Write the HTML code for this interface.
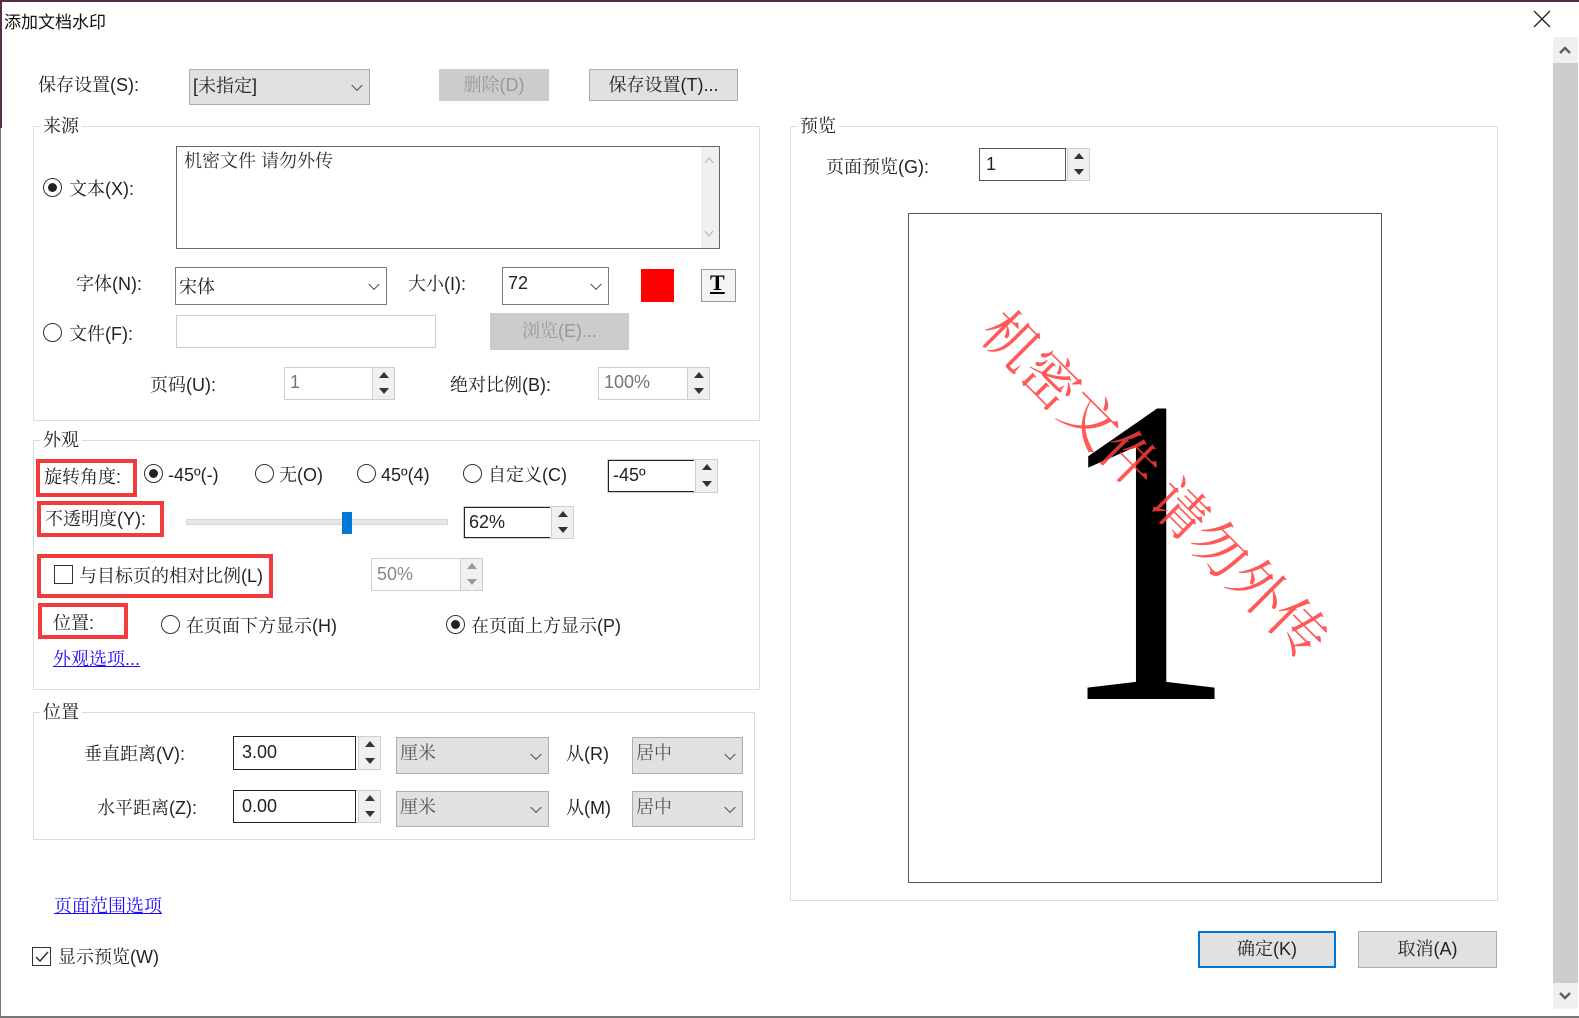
<!DOCTYPE html>
<html><head><meta charset="utf-8"><style>
*{box-sizing:border-box;margin:0;padding:0}
body{width:1579px;height:1018px;background:#fff;position:relative;overflow:hidden;font-family:"Liberation Sans","Noto Serif CJK SC",serif;font-size:18px;color:#222}
.a{position:absolute;white-space:nowrap}
.t{font-family:"Liberation Sans","Noto Serif CJK SC",serif;font-size:18px;line-height:20px}
.grp{position:absolute;border:1px solid #dcdcdc}
.gl{position:absolute;background:#fff;padding:0 3px;font-family:"Noto Serif CJK SC",serif;font-size:18px;line-height:20px;top:-12px;left:6px;color:#222}
.cmb{position:absolute;border:1px solid #7a7a7a;background:#fff}
.cmbg{position:absolute;border:1px solid #adadad;background:#e1e1e1}
.chev{position:absolute;right:8px;top:50%;width:8px;height:8px;border-right:1px solid #444;border-bottom:1px solid #444;transform:translateY(-70%) rotate(45deg)}
.btn{position:absolute;border:1px solid #adadad;background:#e1e1e1;text-align:center}
.spin{position:absolute;border:1px solid #cfcfcf;background:#fff}
.sp{position:absolute;right:0;width:22px;background:#f0f0f0;border-left:1px solid #cfcfcf}
.up,.dn{position:absolute;left:6px;width:0;height:0;border-left:5px solid transparent;border-right:5px solid transparent}
.up{border-bottom:6px solid #333}.dn{border-top:6px solid #333}
.rad{position:absolute;width:19px;height:19px;border:1px solid #333;border-radius:50%;background:#fff}
.rad.on::after{content:"";position:absolute;left:4px;top:4px;width:9px;height:9px;border-radius:50%;background:#222}
.red{position:absolute;border:4px solid #f43b3b}
.lnk{color:#1a0dff;text-decoration:underline}
</style></head><body>
<div class="a" style="left:0;top:0;width:1579px;height:2px;background:#5a2a4a"></div>
<div class="a" style="left:0;top:0;width:2px;height:128px;background:#5a2a4a"></div>
<div class="a" style="left:0;top:128px;width:1px;height:890px;background:#777"></div>
<div class="a" style="left:0;top:1016px;width:1579px;height:2px;background:#777"></div>
<div class="a" style="left:4px;top:8px;font-family:'Noto Sans CJK SC',sans-serif;font-size:17px;color:#111">添加文档水印</div>
<svg class="a" style="left:1533px;top:10px" width="18" height="18"><path d="M1 1L17 17M17 1L1 17" stroke="#222" stroke-width="1.3"/></svg>
<div class="a" style="left:1553px;top:37px;width:25px;height:972px;background:#cdcdcd"></div>
<div class="a" style="left:1553px;top:37px;width:25px;height:26px;background:#f0f0f0"></div>
<div class="a" style="left:1553px;top:983px;width:25px;height:26px;background:#f0f0f0"></div>
<svg class="a" style="left:1558px;top:44px" width="14" height="12"><path d="M2 9L7 4L12 9" stroke="#606060" stroke-width="2.5" fill="none"/></svg>
<svg class="a" style="left:1558px;top:990px" width="14" height="12"><path d="M2 3L7 8L12 3" stroke="#606060" stroke-width="2.5" fill="none"/></svg>

<div class="a t" style="left:38px;top:75px">保存设置(S):</div>
<div class="cmbg" style="left:189px;top:69px;width:181px;height:36px"><span class="a t" style="left:3px;top:6px">[未指定]</span><i class="chev"></i></div>
<div class="btn" style="left:439px;top:69px;width:110px;height:32px;background:#ccc;border-color:#ccc"><span class="t" style="line-height:30px;color:#999">删除(D)</span></div>
<div class="btn" style="left:589px;top:69px;width:149px;height:32px"><span class="t" style="line-height:30px">保存设置(T)...</span></div>

<div class="grp" style="left:33px;top:126px;width:727px;height:295px"><span class="gl">来源</span></div>
<div class="rad on" style="left:43px;top:178px"></div>
<div class="a t" style="left:69px;top:179px">文本(X):</div>
<div class="a" style="left:176px;top:146px;width:544px;height:103px;border:1px solid #666;background:#fff"><span class="a t" style="left:7px;top:4px;color:#333">机密文件 请勿外传</span>
<div class="a" style="right:0;top:0;width:18px;height:101px;background:#f0f0f0"></div>
<svg class="a" style="right:4px;top:8px" width="12" height="10"><path d="M2 8L6 3L10 8" stroke="#bbb" fill="none" stroke-width="1.3"/></svg>
<svg class="a" style="right:4px;top:82px" width="12" height="10"><path d="M2 2L6 7L10 2" stroke="#bbb" fill="none" stroke-width="1.3"/></svg></div>
<div class="a t" style="left:76px;top:274px">字体(N):</div>
<div class="cmb" style="left:175px;top:267px;width:212px;height:38px"><span class="a t" style="left:3px;top:9px">宋体</span><i class="chev"></i></div>
<div class="a t" style="left:408px;top:274px">大小(I):</div>
<div class="cmb" style="left:502px;top:267px;width:107px;height:38px"><span class="a t" style="left:5px;top:5px">72</span><i class="chev"></i></div>
<div class="a" style="left:641px;top:269px;width:33px;height:33px;background:#f00"></div>
<div class="a" style="left:701px;top:269px;width:35px;height:33px;border:1px solid #999;background:#f4f4f4"><span class="a" style="left:8px;top:0px;font-family:'Liberation Serif',serif;font-weight:bold;font-size:22px;text-decoration:underline;color:#000">T</span></div>
<div class="rad" style="left:43px;top:323px"></div>
<div class="a t" style="left:69px;top:324px">文件(F):</div>
<div class="a" style="left:176px;top:315px;width:260px;height:33px;border:1px solid #ccc"></div>
<div class="btn" style="left:490px;top:313px;width:139px;height:37px;background:#ccc;border-color:#ccc"><span class="t" style="line-height:35px;color:#999">浏览(E)...</span></div>
<div class="a t" style="left:150px;top:375px">页码(U):</div>
<div class="spin" style="left:284px;top:367px;width:111px;height:33px"><span class="a t" style="left:5px;top:4px;color:#777">1</span><div class="sp" style="top:0;height:15px"><i class="up" style="top:4px"></i></div><div class="sp" style="top:15px;height:16px"><i class="dn" style="top:5px"></i></div></div>
<div class="a t" style="left:450px;top:375px">绝对比例(B):</div>
<div class="spin" style="left:598px;top:367px;width:112px;height:33px"><span class="a t" style="left:5px;top:4px;color:#777">100%</span><div class="sp" style="top:0;height:15px"><i class="up" style="top:4px"></i></div><div class="sp" style="top:15px;height:16px"><i class="dn" style="top:5px"></i></div></div>

<div class="grp" style="left:33px;top:440px;width:727px;height:250px"><span class="gl">外观</span></div>
<div class="red" style="left:36px;top:459px;width:101px;height:38px"></div>
<div class="a t" style="left:44px;top:467px">旋转角度:</div>
<div class="rad on" style="left:144px;top:464px"></div><div class="a t" style="left:168px;top:465px">-45º(-)</div>
<div class="rad" style="left:255px;top:464px"></div><div class="a t" style="left:279px;top:465px">无(O)</div>
<div class="rad" style="left:357px;top:464px"></div><div class="a t" style="left:381px;top:465px">45º(4)</div>
<div class="rad" style="left:463px;top:464px"></div><div class="a t" style="left:488px;top:465px">自定义(C)</div>
<div class="spin" style="left:607px;top:459px;width:111px;height:34px;border-color:#cfcfcf"><div class="a" style="left:0;top:0;width:86px;height:32px;border:1px solid #222;border-right:none"></div><span class="a t" style="left:5px;top:5px">-45º</span><div class="sp" style="top:0;height:16px"><i class="up" style="top:4px"></i></div><div class="sp" style="top:16px;height:16px"><i class="dn" style="top:5px"></i></div></div>
<div class="red" style="left:37px;top:501px;width:127px;height:36px"></div>
<div class="a t" style="left:45px;top:509px">不透明度(Y):</div>
<div class="a" style="left:186px;top:519px;width:262px;height:6px;background:#e7e7e7;border:1px solid #d6d6d6"></div>
<div class="a" style="left:342px;top:512px;width:10px;height:22px;background:#0078d7"></div>
<div class="spin" style="left:463px;top:506px;width:111px;height:33px"><div class="a" style="left:0;top:0;width:86px;height:31px;border:1px solid #222;border-right:none"></div><span class="a t" style="left:5px;top:5px">62%</span><div class="sp" style="top:0;height:15px"><i class="up" style="top:4px"></i></div><div class="sp" style="top:15px;height:16px"><i class="dn" style="top:5px"></i></div></div>
<div class="red" style="left:37px;top:554px;width:236px;height:44px"></div>
<div class="a" style="left:54px;top:565px;width:19px;height:19px;border:1px solid #333"></div>
<div class="a t" style="left:79px;top:566px">与目标页的相对比例(L)</div>
<div class="spin" style="left:371px;top:558px;width:112px;height:33px"><span class="a t" style="left:5px;top:5px;color:#888">50%</span><div class="sp" style="top:0;height:15px"><i class="up" style="top:4px;border-bottom-color:#999"></i></div><div class="sp" style="top:15px;height:16px"><i class="dn" style="top:5px;border-top-color:#999"></i></div></div>
<div class="red" style="left:38px;top:603px;width:90px;height:36px"></div>
<div class="a t" style="left:53px;top:613px">位置:</div>
<div class="rad" style="left:161px;top:615px"></div><div class="a t" style="left:186px;top:616px">在页面下方显示(H)</div>
<div class="rad on" style="left:446px;top:615px"></div><div class="a t" style="left:471px;top:616px">在页面上方显示(P)</div>
<div class="a t lnk" style="left:53px;top:649px">外观选项...</div>

<div class="grp" style="left:33px;top:712px;width:722px;height:128px"><span class="gl">位置</span></div>
<div class="a t" style="left:84px;top:744px">垂直距离(V):</div>
<div class="spin" style="left:233px;top:736px;width:148px;height:34px"><div class="a" style="left:-1px;top:-1px;width:123px;height:34px;border:1px solid #222"></div><span class="a t" style="left:8px;top:5px">3.00</span><div class="sp" style="top:0;height:16px"><i class="up" style="top:4px"></i></div><div class="sp" style="top:16px;height:16px"><i class="dn" style="top:5px"></i></div></div>
<div class="cmbg" style="left:396px;top:737px;width:153px;height:37px"><span class="a t" style="left:3px;top:5px;color:#555">厘米</span><i class="chev"></i></div>
<div class="a t" style="left:566px;top:744px">从(R)</div>
<div class="cmbg" style="left:632px;top:737px;width:111px;height:37px"><span class="a t" style="left:3px;top:5px;color:#555">居中</span><i class="chev"></i></div>
<div class="a t" style="left:97px;top:798px">水平距离(Z):</div>
<div class="spin" style="left:233px;top:790px;width:148px;height:33px"><div class="a" style="left:-1px;top:-1px;width:123px;height:33px;border:1px solid #222"></div><span class="a t" style="left:8px;top:5px">0.00</span><div class="sp" style="top:0;height:15px"><i class="up" style="top:4px"></i></div><div class="sp" style="top:15px;height:16px"><i class="dn" style="top:5px"></i></div></div>
<div class="cmbg" style="left:396px;top:791px;width:153px;height:36px"><span class="a t" style="left:3px;top:5px;color:#555">厘米</span><i class="chev"></i></div>
<div class="a t" style="left:566px;top:798px">从(M)</div>
<div class="cmbg" style="left:632px;top:791px;width:111px;height:36px"><span class="a t" style="left:3px;top:5px;color:#555">居中</span><i class="chev"></i></div>

<div class="a t lnk" style="left:54px;top:896px">页面范围选项</div>
<div class="a" style="left:32px;top:947px;width:19px;height:19px;border:1px solid #333"></div>
<svg class="a" style="left:34px;top:950px" width="16" height="14"><path d="M2 7L6 11L14 2" stroke="#333" stroke-width="1.5" fill="none"/></svg>
<div class="a t" style="left:58px;top:947px">显示预览(W)</div>

<div class="grp" style="left:790px;top:126px;width:708px;height:775px"><span class="gl">预览</span></div>
<div class="a t" style="left:826px;top:157px">页面预览(G):</div>
<div class="spin" style="left:979px;top:148px;width:111px;height:33px"><div class="a" style="left:-1px;top:-1px;width:87px;height:33px;border:1px solid #555"></div><span class="a t" style="left:6px;top:5px">1</span><div class="sp" style="top:0;height:15px"><i class="up" style="top:4px"></i></div><div class="sp" style="top:15px;height:16px"><i class="dn" style="top:5px"></i></div></div>
<div class="a" style="left:908px;top:213px;width:474px;height:670px;border:1px solid #555;background:#fff;overflow:hidden">
<div class="a" style="left:122px;top:118px;width:230px;text-align:center;font-family:'Liberation Serif',serif;font-size:440px;line-height:440px;color:#000;transform:scaleX(0.82)">1</div>
<div class="a" style="left:-22px;top:236px;width:540px;text-align:center;transform:rotate(45deg);font-family:'Noto Serif CJK SC',serif;font-size:56px;line-height:64px;color:rgba(255,60,60,0.85)">机密文件 请勿外传</div>
</div>
<div class="btn" style="left:1198px;top:931px;width:138px;height:37px;border:2px solid #0078d7"><span class="t" style="line-height:33px">确定(K)</span></div>
<div class="btn" style="left:1358px;top:931px;width:139px;height:37px"><span class="t" style="line-height:35px">取消(A)</span></div>
</body></html>
